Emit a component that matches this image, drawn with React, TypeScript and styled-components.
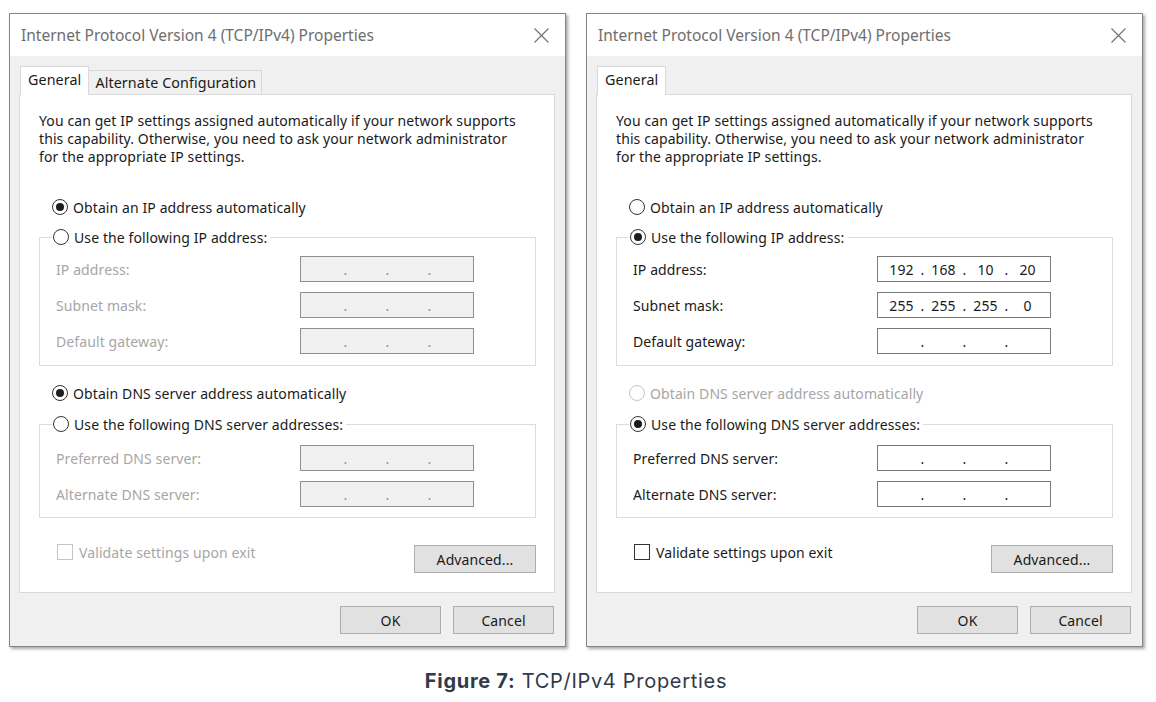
import React from "react";
import styled, { createGlobalStyle } from "styled-components";

const GlobalStyle = createGlobalStyle`
  html, body {
    margin: 0;
    background: #ffffff;
  }
  body {
    font-family: "Noto Sans", "Open Sans", sans-serif;
  }
`;

const Page = styled.div`
  width: 1156px;
  height: 702px;
  display: flex;
  flex-direction: column;
`;

const Dialogs = styled.div`
  display: flex;
  gap: 20px;
  padding: 13px 0 0 9px;
`;

const Window = styled.div`
  width: 557px;
  box-sizing: border-box;
  border: 1px solid #848484;
  box-shadow: 2px 2px 3px rgba(0, 0, 0, 0.35);
  background: #f0f0f0;
  display: flex;
  flex-direction: column;
  letter-spacing: 0.1px;
`;

const TitleBar = styled.div`
  height: 42px;
  background: #ffffff;
  display: flex;
  align-items: center;
  justify-content: space-between;
  padding: 0 16px 0 11px;
  font-size: 15.5px;
  letter-spacing: 0;
  color: #6e6e6e;
`;

const Body = styled.div`
  padding: 10px 10px 0 9px;
`;

const TabStrip = styled.div`
  display: flex;
  align-items: flex-end;
  height: 29px;
  margin: 0 0 -1px 1px;
  position: relative;
  z-index: 1;
`;

const Tab = styled.div<{ $active?: boolean }>`
  box-sizing: border-box;
  height: ${(p) => (p.$active ? "29px" : "25px")};
  padding: 0 ${(p) => (p.$active ? "7px" : "5px")} 0 ${(p) => (p.$active ? "7px" : "6px")};
  display: flex;
  align-items: center;
  padding-bottom: ${(p) => (p.$active ? "4px" : "0")};
  border: 1px solid #d9d9d9;
  border-bottom: ${(p) => (p.$active ? "none" : "1px solid #d9d9d9")};
  border-left-width: ${(p) => (p.$active ? "1px" : "0")};
  background: ${(p) => (p.$active ? "#ffffff" : "#f0f0f0")};
  font-size: 14.3px;
  color: #1a1a1a;
`;

const Panel = styled.div`
  background: #ffffff;
  border: 1px solid #d9d9d9;
  padding: 17px 18px 19px 19px;
  display: flex;
  flex-direction: column;
`;

const Intro = styled.p`
  margin: 0;
  font-size: 14px;
  line-height: 18px;
  color: #1a1a1a;
`;

const OptionRow = styled.label<{ $gap: number; $disabled?: boolean }>`
  display: flex;
  align-items: center;
  gap: 5px;
  height: 20px;
  margin-top: ${(p) => p.$gap}px;
  padding-left: 13px;
  font-size: 14px;
  color: ${(p) => (p.$disabled ? "#a6a6a6" : "#1a1a1a")};
`;

const RadioMark = styled.span<{ $checked?: boolean; $disabled?: boolean }>`
  box-sizing: border-box;
  width: 16px;
  height: 16px;
  border-radius: 50%;
  border: 1px solid ${(p) => (p.$disabled ? "#c4c4c4" : "#333333")};
  display: flex;
  align-items: center;
  justify-content: center;
  flex-shrink: 0;

  &::after {
    content: "";
    width: 8px;
    height: 8px;
    border-radius: 50%;
    background: #1c1c1c;
    display: ${(p) => (p.$checked ? "block" : "none")};
  }
`;

const GroupBox = styled.fieldset<{ $top: number; $padTop: number; $padBottom: number }>`
  margin: ${(p) => p.$top}px 0 0;
  padding: ${(p) => p.$padTop}px 0 ${(p) => p.$padBottom}px 16px;
  border: 1px solid #dcdcdc;
  display: flex;
  flex-direction: column;
  gap: 10px;
  min-width: 0;
`;

const Legend = styled.legend<{ $disabled?: boolean }>`
  display: flex;
  align-items: center;
  gap: 5px;
  height: 20px;
  padding: 0 3px 0 1px;
  margin-left: -4px;
  font-size: 14px;
  color: ${(p) => (p.$disabled ? "#a6a6a6" : "#1a1a1a")};
`;

const FieldRow = styled.div<{ $disabled?: boolean }>`
  display: flex;
  align-items: center;
  height: 26px;
  font-size: 14px;
  color: ${(p) => (p.$disabled ? "#a6a6a6" : "#1a1a1a")};
`;

const FieldLabel = styled.span`
  width: 244px;
`;

const AddressBox = styled.div<{ $disabled?: boolean }>`
  box-sizing: border-box;
  width: 174px;
  height: 26px;
  border: 1px solid ${(p) => (p.$disabled ? "#8f8f8f" : "#7a7a7a")};
  background: ${(p) => (p.$disabled ? "#f0f0f0" : "#ffffff")};
  display: flex;
  align-items: center;
  padding-left: 7px;
  font-size: 14px;
  color: ${(p) => (p.$disabled ? "#8f8f8f" : "#1a1a1a")};
`;

const Octet = styled.span`
  width: 33px;
  text-align: center;
`;

const Dot = styled.span`
  width: 9px;
  text-align: center;
`;

const BottomRow = styled.div`
  display: flex;
  justify-content: space-between;
  align-items: flex-start;
  margin-top: 27px;
`;

const CheckRow = styled.label<{ $disabled?: boolean }>`
  display: flex;
  align-items: center;
  gap: 6px;
  margin: -2px 0 0 18px;
  height: 18px;
  font-size: 14px;
  color: ${(p) => (p.$disabled ? "#a6a6a6" : "#1a1a1a")};
`;

const CheckMark = styled.span<{ $disabled?: boolean }>`
  box-sizing: border-box;
  width: 16px;
  height: 16px;
  border: 1px solid ${(p) => (p.$disabled ? "#c4c4c4" : "#333333")};
  background: #ffffff;
`;

const Button = styled.button<{ $width: number }>`
  box-sizing: border-box;
  width: ${(p) => p.$width}px;
  height: 28px;
  margin: 0;
  padding: 0;
  border: 1px solid #adadad;
  background: #e1e1e1;
  font-family: inherit;
  font-size: 14px;
  letter-spacing: 0.1px;
  color: #1a1a1a;
`;

const Footer = styled.div`
  display: flex;
  justify-content: flex-end;
  gap: 12px;
  padding: 13px 1px 12px 0;
`;

const Caption = styled.div`
  align-self: center;
  margin: 22px 0 0 -4px;
  font-family: Inter, Roboto, "Liberation Sans", sans-serif;
  font-size: 20px;
  line-height: 24px;
  letter-spacing: 0.7px;
  color: #2f3a4a;

  strong {
    font-weight: 700;
  }
`;

const CloseIcon = () => (
  <svg width="15" height="15" viewBox="0 0 15 15">
    <path d="M0.5 0.5 L14.5 14.5 M14.5 0.5 L0.5 14.5" stroke="#707070" strokeWidth="1.1" fill="none" />
  </svg>
);

type Field = { label: string; octets?: string[] };

const AddressField = ({ octets, disabled }: { octets?: string[]; disabled?: boolean }) => {
  const parts = octets ?? ["", "", "", ""];
  return (
    <AddressBox $disabled={disabled}>
      {parts.map((o, i) => (
        <React.Fragment key={i}>
          <Octet>{o}</Octet>
          {i < 3 && <Dot>.</Dot>}
        </React.Fragment>
      ))}
    </AddressBox>
  );
};

type Config = {
  alternateTab: boolean;
  autoIp: boolean;
  autoDns: boolean;
  ipFields: Field[];
  dnsFields: Field[];
};

const PropertiesDialog = ({ cfg }: { cfg: Config }) => {
  const ipDisabled = cfg.autoIp;
  const dnsDisabled = cfg.autoDns;
  return (
    <Window>
      <TitleBar>
        <span>Internet Protocol Version 4 (TCP/IPv4) Properties</span>
        <CloseIcon />
      </TitleBar>
      <Body>
        <TabStrip>
          <Tab $active>General</Tab>
          {cfg.alternateTab && <Tab>Alternate Configuration</Tab>}
        </TabStrip>
        <Panel>
          <Intro>
            You can get IP settings assigned automatically if your network supports
            <br />
            this capability. Otherwise, you need to ask your network administrator
            <br />
            for the appropriate IP settings.
          </Intro>

          <OptionRow $gap={31}>
            <RadioMark $checked={cfg.autoIp} />
            Obtain an IP address automatically
          </OptionRow>

          <GroupBox $top={10} $padTop={9} $padBottom={11}>
            <Legend>
              <RadioMark $checked={!cfg.autoIp} />
              Use the following IP address:
            </Legend>
            {cfg.ipFields.map((f) => (
              <FieldRow key={f.label} $disabled={ipDisabled}>
                <FieldLabel>{f.label}</FieldLabel>
                <AddressField octets={f.octets} disabled={ipDisabled} />
              </FieldRow>
            ))}
          </GroupBox>

          <OptionRow $gap={17} $disabled={!cfg.autoIp}>
            <RadioMark $checked={cfg.autoDns} $disabled={!cfg.autoIp} />
            Obtain DNS server address automatically
          </OptionRow>

          <GroupBox $top={11} $padTop={11} $padBottom={10}>
            <Legend>
              <RadioMark $checked={!cfg.autoDns} />
              Use the following DNS server addresses:
            </Legend>
            {cfg.dnsFields.map((f) => (
              <FieldRow key={f.label} $disabled={dnsDisabled}>
                <FieldLabel>{f.label}</FieldLabel>
                <AddressField octets={f.octets} disabled={dnsDisabled} />
              </FieldRow>
            ))}
          </GroupBox>

          <BottomRow>
            <CheckRow $disabled={dnsDisabled}>
              <CheckMark $disabled={dnsDisabled} />
              Validate settings upon exit
            </CheckRow>
            <Button $width={122}>Advanced...</Button>
          </BottomRow>
        </Panel>
        <Footer>
          <Button $width={101}>OK</Button>
          <Button $width={101}>Cancel</Button>
        </Footer>
      </Body>
    </Window>
  );
};

const dnsFields: Field[] = [{ label: "Preferred DNS server:" }, { label: "Alternate DNS server:" }];

const automatic: Config = {
  alternateTab: true,
  autoIp: true,
  autoDns: true,
  ipFields: [{ label: "IP address:" }, { label: "Subnet mask:" }, { label: "Default gateway:" }],
  dnsFields,
};

const manual: Config = {
  alternateTab: false,
  autoIp: false,
  autoDns: false,
  ipFields: [
    { label: "IP address:", octets: ["192", "168", "10", "20"] },
    { label: "Subnet mask:", octets: ["255", "255", "255", "0"] },
    { label: "Default gateway:" },
  ],
  dnsFields,
};

export default function App() {
  return (
    <Page>
      <GlobalStyle />
      <Dialogs>
        <PropertiesDialog cfg={automatic} />
        <PropertiesDialog cfg={manual} />
      </Dialogs>
      <Caption>
        <strong>Figure 7:</strong> TCP/IPv4 Properties
      </Caption>
    </Page>
  );
}
